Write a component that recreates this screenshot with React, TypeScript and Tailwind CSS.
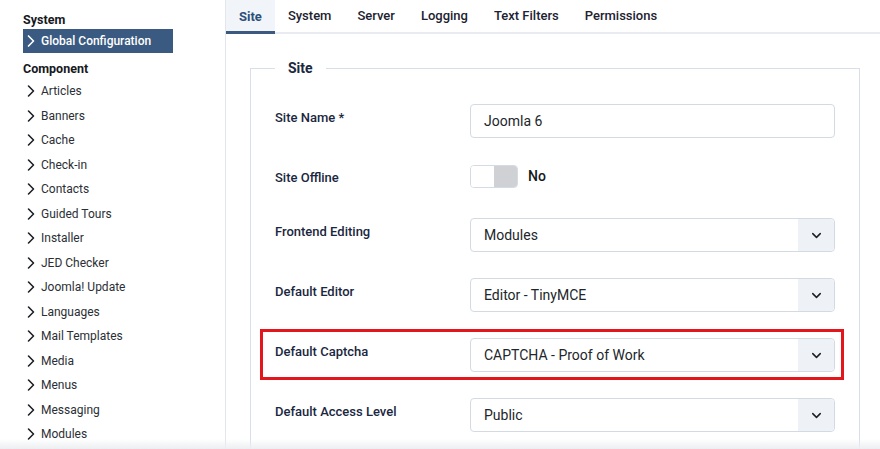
import { ChevronRight, ChevronDown } from 'lucide-react'

const components = [
  'Articles',
  'Banners',
  'Cache',
  'Check-in',
  'Contacts',
  'Guided Tours',
  'Installer',
  'JED Checker',
  'Joomla! Update',
  'Languages',
  'Mail Templates',
  'Media',
  'Menus',
  'Messaging',
  'Modules',
]

const tabs = ['Site', 'System', 'Server', 'Logging', 'Text Filters', 'Permissions']

const Select = ({ value }: { value: string }) => (
  <div className="flex h-[34px] w-full items-center rounded-[4px] border border-[#d4dae2] bg-white">
    <span className="flex-1 pl-[13px] text-[14px] text-[#22262a]">{value}</span>
    <span className="flex h-full w-[36px] items-center justify-center rounded-r-[4px] bg-[#eef2f7]">
      <ChevronDown size={15} strokeWidth={2.4} className="text-[#1c1f24]" />
    </span>
  </div>
)

const Row = ({ label, children, marked }: { label: string; children: React.ReactNode; marked?: boolean }) => (
  <div className="relative flex">
    {marked && (
      <div className="pointer-events-none absolute -top-[9px] -bottom-[8px] -left-[15px] -right-[9px] border-[3px] border-[#e3161b]" />
    )}
    <div className="w-[195px] shrink-0 pt-[4px] text-[13px] leading-[20px] font-medium text-[#1a2740]">{label}</div>
    <div className="flex-1">{children}</div>
  </div>
)

export default function App() {
  return (
    <div
      className="relative flex h-[449px] w-[880px] overflow-hidden bg-white"
      style={{ fontFamily: 'Roboto, "Noto Sans", sans-serif' }}
    >
      {/* sidebar */}
      <aside className="w-[226px] shrink-0 border-r border-[#e3e6ea] pt-[10px] pl-[23px]">
        <div className="h-[19px] text-[12.5px] leading-[19px] font-bold text-[#16191d]">System</div>
        <div className="flex h-[24px] w-[150px] items-center bg-[#3a5a81] text-[12px] font-medium text-white">
          <ChevronRight size={20} strokeWidth={2} className="-ml-[2px] shrink-0" />
          <span>Global Configuration</span>
        </div>
        <div className="mt-[6px] h-[20px] text-[12.5px] leading-[20px] font-bold text-[#16191d]">Component</div>
        {components.map((c) => (
          <div key={c} className="flex h-[24.5px] items-center text-[12px] text-[#2b2f35]">
            <ChevronRight size={20} strokeWidth={1.9} className="-ml-[2.5px] shrink-0 text-[#1c1f24]" />
            <span className="ml-[0.5px]">{c}</span>
          </div>
        ))}
      </aside>

      {/* main */}
      <main className="flex-1">
        <nav className="flex h-[34px] border-b-2 border-[#e8ebf0]">
          {tabs.map((t, i) => (
            <div
              key={t}
              className={
                i === 0
                  ? 'flex h-[34px] items-center border-b-[3px] border-[#3c5a80] bg-[#f1f4f8] px-[13px] pt-[2px] text-[13px] font-bold text-[#2d507a]'
                  : 'flex h-[32px] items-center px-[13px] text-[13px] font-medium text-[#1c2230]'
              }
            >
              {t}
            </div>
          ))}
        </nav>

        <div className="pt-[24px] pr-[20px] pl-[24px]">
          <fieldset className="h-[420px] border border-[#d9dfe7] px-[24px] pt-[26px]">
            <legend className="px-[13px] text-[14px] leading-[20px] font-bold text-[#1a2740]">Site</legend>
            <div className="flex flex-col gap-[26px]">
              <Row label="Site Name *">
                <div className="flex h-[34px] items-center rounded-[4px] border border-[#d4dae2] pl-[13px] text-[14px] text-[#22262a]">
                  Joomla 6
                </div>
              </Row>
              <Row label="Site Offline">
                <div className="flex h-[28px] items-start gap-[10px] pt-[1px]">
                  <div className="flex h-[23px] w-[48px] overflow-hidden rounded-[4px] border border-[#d5dbe2]">
                    <span className="flex-1 bg-white" />
                    <span className="flex-1 bg-[#cfd1d4]" />
                  </div>
                  <span className="text-[14px] leading-[23px] font-medium text-[#16191d]">No</span>
                </div>
              </Row>
              <Row label="Frontend Editing">
                <Select value="Modules" />
              </Row>
              <Row label="Default Editor">
                <Select value="Editor - TinyMCE" />
              </Row>
              <Row label="Default Captcha" marked>
                <Select value="CAPTCHA - Proof of Work" />
              </Row>
              <Row label="Default Access Level">
                <Select value="Public" />
              </Row>
            </div>
          </fieldset>
        </div>
      </main>

      <div className="pointer-events-none absolute right-0 bottom-0 left-0 h-[10px] bg-gradient-to-b from-transparent to-[#eceef1]" />
    </div>
  )
}
